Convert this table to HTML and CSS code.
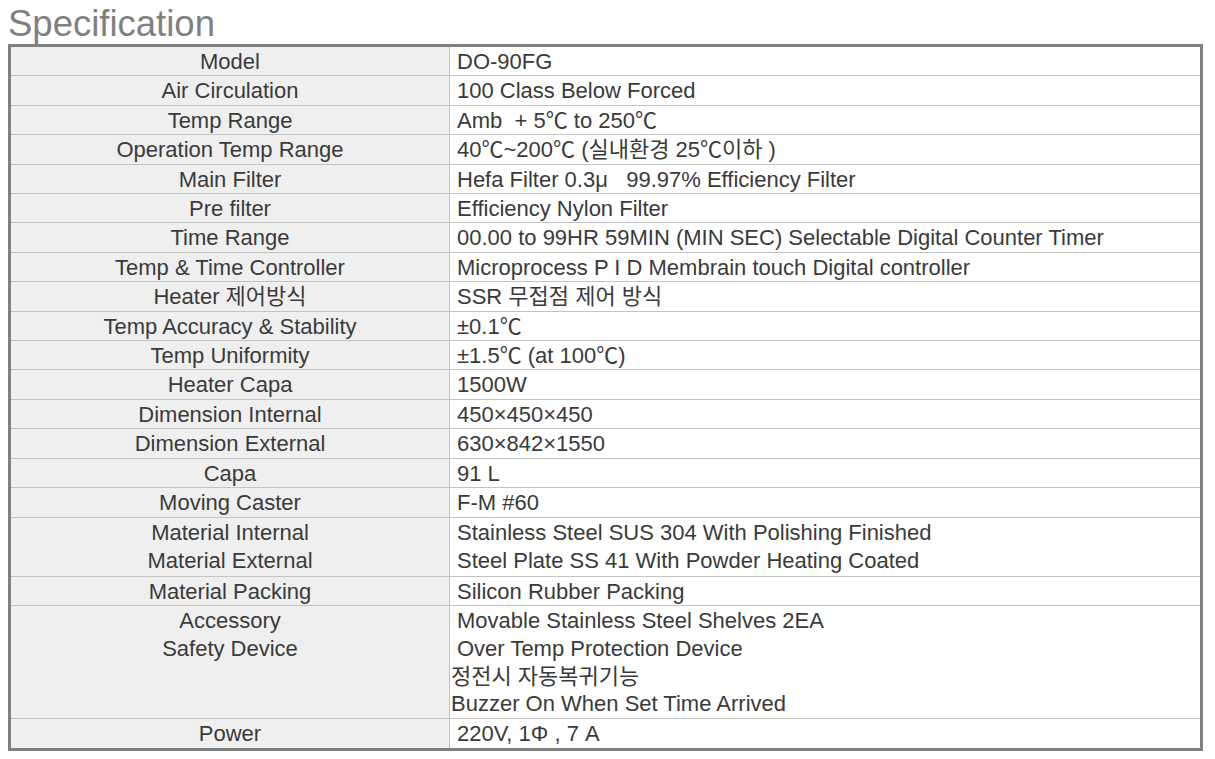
FILE: index.html
```html
<!DOCTYPE html>
<html lang="ko">
<head>
<meta charset="utf-8">
<title>Specification</title>
<link rel="stylesheet" href="styles.css">
</head>
<body>
<h1 class="title">Specification</h1>
<div class="spec">
<table class="spec-table">
<tbody>
<tr><td class="k">Model</td><td class="v">DO-90FG</td></tr>
<tr><td class="k">Air Circulation</td><td class="v">100 Class Below Forced</td></tr>
<tr><td class="k">Temp Range</td><td class="v">Amb&nbsp; + 5℃ to 250℃</td></tr>
<tr><td class="k">Operation Temp Range</td><td class="v">40℃~200℃ (실내환경 25℃이하 )</td></tr>
<tr><td class="k">Main Filter</td><td class="v">Hefa Filter 0.3μ&nbsp;&nbsp; 99.97% Efficiency Filter</td></tr>
<tr><td class="k">Pre filter</td><td class="v">Efficiency Nylon Filter</td></tr>
<tr><td class="k">Time Range</td><td class="v">00.00 to 99HR 59MIN (MIN SEC) Selectable Digital Counter Timer</td></tr>
<tr><td class="k">Temp &amp; Time Controller</td><td class="v">Microprocess P I D Membrain touch Digital controller</td></tr>
<tr><td class="k">Heater 제어방식</td><td class="v">SSR 무접점 제어 방식</td></tr>
<tr><td class="k">Temp Accuracy &amp; Stability</td><td class="v">±0.1℃</td></tr>
<tr><td class="k">Temp Uniformity</td><td class="v">±1.5℃ (at 100℃)</td></tr>
<tr><td class="k">Heater Capa</td><td class="v">1500W</td></tr>
<tr><td class="k">Dimension Internal</td><td class="v">450×450×450</td></tr>
<tr><td class="k">Dimension External</td><td class="v">630×842×1550</td></tr>
<tr><td class="k">Capa</td><td class="v">91 L</td></tr>
<tr><td class="k">Moving Caster</td><td class="v">F-M #60</td></tr>
<tr class="double"><td class="k"><div>Material Internal</div><div>Material External</div></td><td class="v"><div>Stainless Steel SUS 304 With Polishing Finished</div><div>Steel Plate SS 41 With Powder Heating Coated</div></td></tr>
<tr><td class="k">Material Packing</td><td class="v">Silicon Rubber Packing</td></tr>
<tr class="multi"><td class="k"><div>Accessory</div><div>Safety Device</div></td><td class="v"><div>Movable Stainless Steel Shelves 2EA</div><div>Over Temp Protection Device</div><div class="flush">정전시 자동복귀기능</div><div class="flush">Buzzer On When Set Time Arrived</div></td></tr>
<tr><td class="k">Power</td><td class="v">220V, 1Φ , 7 A</td></tr>
</tbody>
</table>
</div>
</body>
</html>
```

FILE: styles.css
```css
html, body {
  margin: 0;
  padding: 0;
  background: #ffffff;
}

body {
  font-family: "Liberation Sans", Arial, "Noto Sans CJK KR", sans-serif;
  color: #3a3a3a;
}

.title {
  margin: 0;
  padding: 4px 0 0 8px;
  height: 40px;
  font-size: 36.5px;
  font-weight: normal;
  line-height: 40px;
  color: #808080;
  letter-spacing: 0;
}

.spec {
  margin-left: 8px;
  width: 1189px;
  border: 3px solid #808080;
  background: #ffffff;
}

.spec-table {
  width: 100%;
  border-collapse: collapse;
  table-layout: fixed;
  font-size: 22px;
}

.spec-table td {
  padding: 1px 0 0 0;
  border-bottom: 1px solid #c3c3c3;
  line-height: 27.4px;
  vertical-align: top;
  white-space: nowrap;
}

.spec-table tr:last-child td {
  border-bottom: none;
}

.k {
  width: 438px;
  background: #efefef;
  text-align: center;
  border-right: 1px solid #c3c3c3;
}

.spec-table .v {
  background: #ffffff;
  padding-left: 7px;
}

.spec-table .double td {
  line-height: 28.5px;
}

.spec-table .multi td {
  line-height: 27.85px;
}

.flush {
  margin-left: -6px;
}
```
